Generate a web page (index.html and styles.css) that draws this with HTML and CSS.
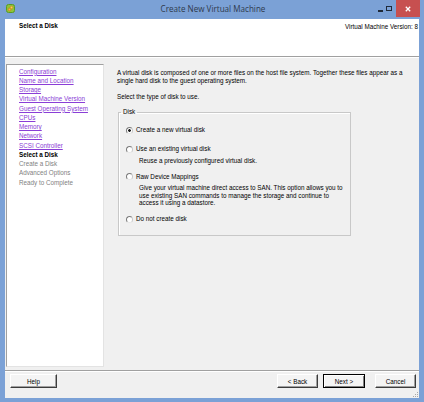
FILE: index.html
```html
<!DOCTYPE html>
<html>
<head>
<meta charset="utf-8">
<link rel="stylesheet" href="styles.css">
</head>
<body>
<div class="window">
  <div class="titlebar">
    <div class="tb-left">
      <svg class="app-icon" width="9" height="9" viewBox="0 0 9 9">
        <rect x="0.5" y="0.5" width="8" height="8" rx="2" fill="#8cc43c" stroke="#5c9a22"/>
        <rect x="2.2" y="4.2" width="2.6" height="2.6" rx="0.8" fill="#f6b83c" stroke="#c97a1a" stroke-width="0.6"/>
        <rect x="4.2" y="2.2" width="2.6" height="2.6" rx="0.8" fill="#f9d35a" stroke="#c97a1a" stroke-width="0.6"/>
      </svg>
    </div>
    <div class="tb-title">Create New Virtual Machine</div>
    <div class="tb-right">
      <span class="ctl ctl-min"><i></i></span>
      <span class="ctl ctl-max"><i></i></span>
      <span class="ctl ctl-close">
        <svg width="6" height="6" viewBox="0 0 6 6"><path d="M0.8 0.8 L5.2 5.2 M5.2 0.8 L0.8 5.2" stroke="#fff" stroke-width="1.3"/></svg>
      </span>
    </div>
  </div>
  <div class="frame">
    <div class="header">
      <div class="page-title">Select a Disk</div>
      <div class="version">Virtual Machine Version: 8</div>
    </div>
    <div class="main">
      <nav class="nav">
        <a class="step done">Configuration</a>
        <a class="step done">Name and Location</a>
        <a class="step done">Storage</a>
        <a class="step done">Virtual Machine Version</a>
        <a class="step done">Guest Operating System</a>
        <a class="step done">CPUs</a>
        <a class="step done">Memory</a>
        <a class="step done">Network</a>
        <a class="step done">SCSI Controller</a>
        <span class="step current">Select a Disk</span>
        <span class="step todo">Create a Disk</span>
        <span class="step todo">Advanced Options</span>
        <span class="step todo">Ready to Complete</span>
      </nav>
      <section class="content">
        <p class="intro">A virtual disk is composed of one or more files on the host file system. Together these files appear as a<br>single hard disk to the guest operating system.</p>
        <p class="prompt">Select the type of disk to use.</p>
        <fieldset class="group">
          <legend>Disk</legend>
          <div class="choices">
            <div class="choice first">
              <div class="opt"><span class="radio checked"></span><span>Create a new virtual disk</span></div>
            </div>
            <div class="choice">
              <div class="opt"><span class="radio"></span><span>Use an existing virtual disk</span></div>
              <div class="desc">Reuse a previously configured virtual disk.</div>
            </div>
            <div class="choice">
              <div class="opt"><span class="radio"></span><span>Raw Device Mappings</span></div>
              <div class="desc">Give your virtual machine direct access to SAN. This option allows you to<br>use existing SAN commands to manage the storage and continue to<br>access it using a datastore.</div>
            </div>
            <div class="choice">
              <div class="opt"><span class="radio"></span><span>Do not create disk</span></div>
            </div>
          </div>
        </fieldset>
      </section>
    </div>
    <div class="footer">
      <button class="btn btn-help">Help</button>
      <div class="spacer"></div>
      <button class="btn btn-back">&lt; Back</button>
      <button class="btn btn-next">Next &gt;</button>
      <button class="btn btn-cancel">Cancel</button>
      <svg class="grip" width="7" height="7" viewBox="0 0 7 7">
        <g fill="#a8a8a8">
          <rect x="5" y="1" width="1" height="1"/>
          <rect x="3" y="3" width="1" height="1"/><rect x="5" y="3" width="1" height="1"/>
          <rect x="1" y="5" width="1" height="1"/><rect x="3" y="5" width="1" height="1"/><rect x="5" y="5" width="1" height="1"/>
        </g>
      </svg>
    </div>
  </div>
</div>
</body>
</html>
```
FILE: styles.css
```css
* { box-sizing: border-box; }
html, body { margin: 0; padding: 0; }
body {
  width: 424px;
  height: 402px;
  overflow: hidden;
  font-family: "Liberation Sans", Arial, sans-serif;
  font-size: 6.3px;
  color: #000;
}
.window {
  width: 424px;
  height: 402px;
  background: #7ba1d6;
  display: flex;
  flex-direction: column;
}
.titlebar {
  height: 19px;
  display: grid;
  grid-template-columns: 1fr auto 1fr;
  align-items: start;
}
.tb-left { padding: 4px 0 0 6px; }
.app-icon { display: block; }
.tb-title {
  font-family: "Open Sans", "Liberation Sans", sans-serif;
  font-size: 8.1px;
  line-height: 18px;
  color: #2e3a4c;
  padding-left: 2px;
}
.tb-right {
  display: flex;
  justify-content: flex-end;
  padding-right: 4px;
}
.ctl {
  height: 17px;
  display: flex;
  align-items: center;
  justify-content: center;
}
.ctl-min { width: 9px; }
.ctl-min i { display: block; width: 5px; height: 1.5px; background: #1f2a3a; margin-top: 5px; }
.ctl-max { width: 8px; margin-right: 3px; }
.ctl-max i { display: block; width: 6px; height: 5px; border: 1px solid #1f2a3a; border-top-width: 1.5px; margin-top: -1px; }
.ctl-close {
  width: 24px;
  background: #c75050;
}
.ctl-close svg { display: block; }
.frame {
  flex: 1;
  margin: 0 5px 4px 5px;
  background: #f0f0f0;
  display: flex;
  flex-direction: column;
}
.header {
  height: 38px;
  background: #fff;
  border-bottom: 1px solid #a0a0a0;
  display: flex;
  justify-content: space-between;
  align-items: flex-start;
  padding: 3px 1px 0 14px;
  line-height: 8px;
}
.page-title { font-weight: bold; }
.version { margin-top: 1px; }
.main {
  flex: 1;
  display: flex;
  padding: 7px 0 3px 1px;
  box-shadow: inset 0 1px 0 #fff;
}
.nav {
  width: 98px;
  background: #fff;
  border-top: 1px solid #a0a0a0;
  border-left: 1px solid #a0a0a0;
  border-right: 1px solid #e3e3e3;
  border-bottom: 1px solid #e3e3e3;
  padding: 1.5px 0 0 12px;
  display: flex;
  flex-direction: column;
  line-height: 9.25px;
}
.step { display: block; white-space: nowrap; }
.done { color: #8a3ed6; text-decoration: underline; }
.current { font-weight: bold; color: #000; }
.todo { color: #7f7f7f; }
.content {
  flex: 1;
  padding: 5px 0 0 13px;
  line-height: 8px;
  white-space: nowrap;
}
.content p { margin: 0; }
.prompt { margin-top: 8px !important; }
.group {
  margin: 7px 0 0 1px;
  padding: 0;
  width: 233px;
  min-width: 0;
  border: 1px solid #c8c8c8;
  box-shadow: inset 1px 1px 0 #fff;
}
.group legend {
  padding: 0 2px;
  margin-left: 2px;
  line-height: 8px;
}
.choices {
  display: flex;
  flex-direction: column;
  gap: 8.25px;
  padding: 10px 0 12px 7px;
}
.choice.first { padding-bottom: 2.75px; }
.opt {
  display: flex;
  align-items: center;
  height: 8px;
}
.radio {
  width: 7px;
  height: 7px;
  border-radius: 50%;
  border: 1px solid;
  border-color: #7a7a7a #c8c8c8 #e6e6e6 #7a7a7a;
  background: #fff;
  margin-right: 3px;
  flex: none;
}
.radio.checked {
  background: radial-gradient(circle, #1a1a1a 0 1.1px, #fff 1.6px);
}
.desc {
  padding-left: 13px;
  margin-top: 3.75px;
  line-height: 7.5px;
}
.footer {
  position: relative;
  height: 28px;
  border-top: 1px solid #a0a0a0;
  box-shadow: inset 0 1px 0 #fff;
  display: flex;
  align-items: flex-start;
  padding: 3px 3px 0 5px;
}
.spacer { flex: 1; }
.btn {
  height: 14px;
  margin: 0;
  padding: 0;
  font-family: "Liberation Sans", Arial, sans-serif;
  font-size: 6.3px;
  color: #000;
  background: #f4f4f4;
  border: 1px solid;
  border-color: #fff #3c3c3c #3c3c3c #fff;
  box-shadow: inset -1px -1px 0 #a0a0a0;
}
.btn-help { width: 47px; }
.btn-back { width: 41px; }
.btn-next {
  width: 42px;
  margin-left: 5px;
  border-color: #000;
  box-shadow: inset 1px 1px 0 #fff, inset -1px -1px 0 #808080;
}
.btn-cancel { width: 41px; margin-left: 10px; }
.grip {
  position: absolute;
  right: 0;
  bottom: 0;
}
```
